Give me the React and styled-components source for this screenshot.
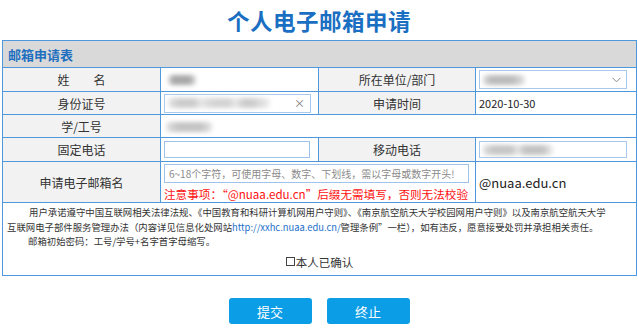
import React from "react";
import styled, { createGlobalStyle } from "styled-components";

const GlobalStyle = createGlobalStyle`
  body {
    margin: 0;
    background: #fff;
    color: #333;
    font-family: "Noto Sans CJK SC", "Noto Sans", sans-serif;
  }
`;

const Page = styled.div`
  width: 638px;
  padding: 0 2px;
  box-sizing: border-box;
`;

const Title = styled.h1`
  margin: 0;
  height: 40px;
  line-height: 40px;
  text-align: center;
  font-size: 22.5px;
  font-weight: bold;
  color: #1b6fc2;
  letter-spacing: 0.5px;
`;

const Table = styled.table`
  width: 634px;
  table-layout: fixed;
  border-collapse: collapse;
  border: 1px solid #4f98dc;
`;

const Row = styled.tr`
  height: ${(p) => p.h}px;
`;

const HeadCell = styled.th`
  background: #d9d9d9;
  color: #1e6fc0;
  font-size: 13px;
  font-weight: bold;
  text-align: left;
  padding: 0 5px;
  border: 1px solid #4f98dc;
`;

const Label = styled.td`
  background: #f2f2f2;
  border: 1px solid #4f98dc;
  text-align: center;
  font-size: 12px;
  color: #333;
  padding: 0;
`;

const Value = styled.td`
  background: #fff;
  border: 1px solid #4f98dc;
  font-size: ${(p) => p.size || 12}px;
  padding: 0 3px;
  color: #222;
`;

const Blank = styled.td`
  border: none;
  border-left: hidden;
  border-right: 1px solid #4f98dc;
`;

const Field = styled.div`
  position: relative;
  box-sizing: border-box;
  width: ${(p) => p.w}px;
  height: ${(p) => p.h || 18}px;
  border: 1px solid #a9c9ec;
  background: #fff;
  display: flex;
  align-items: center;
  padding: 0 3px;
`;

const TextInput = styled.input`
  box-sizing: border-box;
  display: block;
  width: ${(p) => p.w}px;
  height: ${(p) => p.h || 18}px;
  margin: ${(p) => p.m || "0"};
  border: 1px solid #9fc2ea;
  padding: 0 4px;
  font-family: inherit;
  font-size: 10px;
  outline: none;
  &::placeholder {
    color: #8a8a8a;
  }
`;

const Blur = styled.span`
  display: inline-block;
  width: ${(p) => p.w}px;
  height: 10px;
  border-radius: 4px;
  background: ${(p) => p.bg};
  filter: blur(2px);
  margin-left: ${(p) => p.ml || 0}px;
`;

const ClearMark = styled.span`
  position: absolute;
  right: 5px;
  top: 0;
  line-height: 16px;
  font-size: 11px;
  color: #777;
`;

const Chevron = styled.svg`
  position: absolute;
  right: 5px;
  top: 6px;
`;

const Hint = styled.div`
  color: #ff1010;
  font-size: 11.6px;
  line-height: 16px;
  margin-top: 3px;
  white-space: nowrap;
`;

const NoticeCell = styled.td`
  border: 1px solid #4f98dc;
  padding: 2px 4px 2px;
  vertical-align: top;
`;

const Para = styled.p`
  margin: 0;
  font-size: 9.4px;
  line-height: 14.5px;
  color: #333;
  text-indent: ${(p) => p.indent || 0}px;
  white-space: nowrap;
`;

const Link = styled.span`
  color: #1a6fc9;
`;

const Confirm = styled.label`
  display: flex;
  align-items: center;
  justify-content: center;
  margin-top: 5px;
  font-size: 11.5px;
  line-height: 16px;
  color: #333;
`;

const Box = styled.span`
  display: inline-block;
  width: 7px;
  height: 7px;
  border: 1px solid #444;
  margin-right: 1px;
`;

const Actions = styled.div`
  display: flex;
  justify-content: center;
  gap: 15px;
  margin-top: 22px;
`;

const Button = styled.button`
  width: 83px;
  height: 26px;
  border: none;
  border-radius: 3px;
  background: #0b9de6;
  color: #fff;
  font-family: inherit;
  font-size: 13px;
  cursor: pointer;
`;

const grayBlur = "linear-gradient(90deg, #ddd 0%, #a8a8a8 20%, #a8a8a8 75%, #ddd 100%)";

export default function App() {
  return (
    <>
      <GlobalStyle />
      <Page>
        <Title>个人电子邮箱申请</Title>
        <Table>
          <colgroup>
            <col style={{ width: 158 }} />
            <col style={{ width: 158 }} />
            <col style={{ width: 157 }} />
            <col style={{ width: 161 }} />
          </colgroup>
          <tbody>
            <Row h={27}>
              <HeadCell colSpan={4}>邮箱申请表</HeadCell>
            </Row>
            <Row h={24}>
              <Label>姓　　名</Label>
              <Value>
                <Blur w={28} ml={4} bg={grayBlur} />
              </Value>
              <Label>所在单位/部门</Label>
              <Value>
                <Field w={148} h={19}>
                  <Blur w={42} bg="linear-gradient(90deg,#ddd,#bbb 20%,#bbb 70%,#e4e4e4)" />
                  <Chevron width="9" height="6" viewBox="0 0 9 6">
                    <path d="M0.5 0.8 L4.5 4.8 L8.5 0.8" fill="none" stroke="#888" strokeWidth="1" />
                  </Chevron>
                </Field>
              </Value>
            </Row>
            <Row h={23}>
              <Label>身份证号</Label>
              <Value>
                <Field w={147} h={19}>
                  <Blur
                    w={102}
                    bg="linear-gradient(90deg,#e8e8e8,#ccc 10%,#ccc 25%,#e6e6e6 32%,#d4d4d4 45%,#d4d4d4 60%,#e8e8e8 66%,#ccc 75%,#ccc 82%,#eee)"
                  />
                  <ClearMark>×</ClearMark>
                </Field>
              </Value>
              <Label>申请时间</Label>
              <Value size={11}>2020-10-30</Value>
            </Row>
            <Row h={23}>
              <Label>学/工号</Label>
              <Value>
                <Blur w={46} ml={2} bg="linear-gradient(90deg,#e4e4e4,#c4c4c4 25%,#c4c4c4 75%,#e4e4e4)" />
              </Value>
              <Blank colSpan={2} />
            </Row>
            <Row h={24}>
              <Label>固定电话</Label>
              <Value>
                <TextInput w={146} h={17} readOnly />
              </Value>
              <Label>移动电话</Label>
              <Value>
                <Field w={148} h={17}>
                  <Blur w={70} bg="linear-gradient(90deg,#e0e0e0,#c6c6c6 15%,#c6c6c6 40%,#e6e6e6 50%,#c2c2c2 60%,#c2c2c2 85%,#eee)" />
                </Field>
              </Value>
            </Row>
            <Row h={40}>
              <Label>申请电子邮箱名</Label>
              <Value colSpan={2}>
                <TextInput
                  w={305}
                  h={19}
                  m="2px 0 0"
                  readOnly
                  placeholder="6~18个字符，可使用字母、数字、下划线，需以字母或数字开头!"
                />
                <Hint>注意事项：“@nuaa.edu.cn”后缀无需填写，否则无法校验</Hint>
              </Value>
              <Value size={13}>@nuaa.edu.cn</Value>
            </Row>
            <Row h={73}>
              <NoticeCell colSpan={4}>
                <Para indent={22}>
                  用户承诺遵守中国互联网相关法律法规、《中国教育和科研计算机网用户守则》、《南京航空航天大学校园网用户守则》以及南京航空航天大学
                </Para>
                <Para>
                  互联网电子部件服务管理办法（内容详见信息化处网站
                  <Link>http://xxhc.nuaa.edu.cn/</Link>
                  管理条例”一栏），如有违反，愿意接受处罚并承担相关责任。
                </Para>
                <Para indent={21}>邮箱初始密码：工号/学号+名字首字母缩写。</Para>
                <Confirm>
                  <Box />
                  本人已确认
                </Confirm>
              </NoticeCell>
            </Row>
          </tbody>
        </Table>
        <Actions>
          <Button>提交</Button>
          <Button>终止</Button>
        </Actions>
      </Page>
    </>
  );
}
